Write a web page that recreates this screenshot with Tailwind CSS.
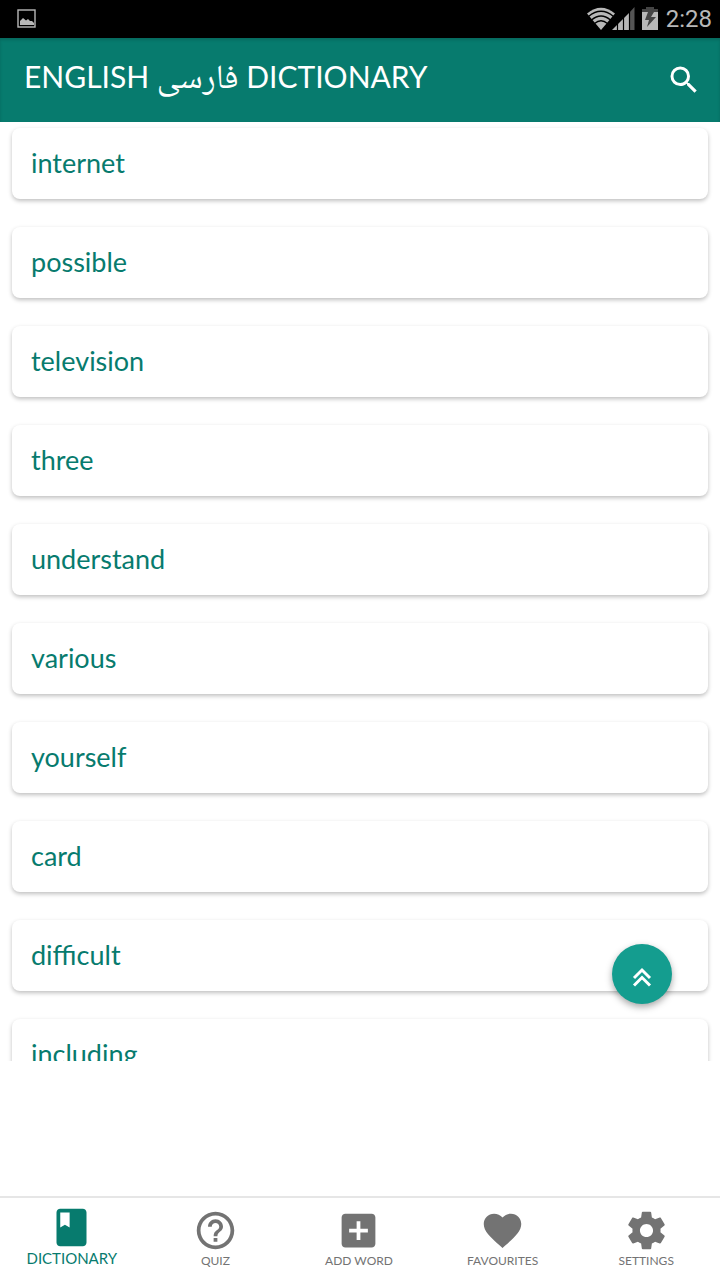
<!DOCTYPE html>
<html lang="en">
<head>
  <meta charset="UTF-8">
  <meta name="viewport" content="width=device-width, initial-scale=1.0">
  <title>English فارسی Dictionary</title>
  <script src="https://cdn.jsdelivr.net/npm/@tailwindcss/browser@4"></script>
</head>
<body class="bg-white font-[Lato,'DejaVu_Sans',sans-serif]">
  <div class="h-screen flex flex-col">
    <!-- Status bar -->
    <div class="h-[38px] shrink-0 bg-black flex items-center justify-between pl-4 pr-2 text-[#b8b8b8]">
      <svg class="w-[22px] h-[22px]" viewBox="0 0 22 22" fill="none">
        <rect x="2" y="2" width="17" height="17" stroke="currentColor" stroke-width="1.4"/>
        <path d="M4 17v-4l3-3 3 2.500 2-1.500 2 2 2 0 2 2v2z" fill="currentColor"/>
      </svg>
      <div class="flex items-center">
        <svg class="w-[30px] h-[24px]" viewBox="0 0 30 24">
          <path d="M1 6.500Q15-5 29 6.500L15 23z" fill="currentColor"/>
          <path d="M2.500 9.500Q15-1 27.500 9.500M5.500 13Q15 5 24.500 13M8.500 16.500Q15 11 21.500 16.500" fill="none" stroke="#000" stroke-width="1.300"/>
        </svg>
        <svg class="w-[24px] h-[24px] -ml-1" viewBox="0 0 24 24">
          <path d="M0 23 17 6v17z" fill="currentColor"/>
          <path d="M17 6 22.500 0v23H17z" fill="#555"/>
          <path d="M5.500 10v14M11.500 6v18M17.500 3v20" stroke="#000" stroke-width="1.200"/>
        </svg>
        <svg class="w-[16px] h-[24px] ml-1.5" viewBox="0 0 16 24">
          <path d="M0 5h16v18H0z" fill="currentColor"/>
          <path d="M4 0h8v2h4v3H0V2h4zM6 5h6L9 10h5L5 20l2-7H3z" fill="#444"/>
        </svg>
        <span class="ml-2 text-2xl font-[Roboto,sans-serif]">2:28</span>
      </div>
    </div>

    <!-- Header -->
    <header class="h-[84px] shrink-0 bg-[#077b6e] flex items-center justify-between pl-6 pr-[18px] pb-1 shadow-[inset_0_2px_3px_rgb(0_0_0/0.15)]">
      <h1 class="text-[30px] leading-9 text-white">ENGLISH <span lang="fa" class="text-[34px] font-[Noto_Naskh_Arabic,DejaVu_Sans,sans-serif]">فارسی</span> DICTIONARY</h1>
      <button type="button" aria-label="Search" class="w-9 h-9 mt-1 text-white">
        <svg class="w-9 h-9" viewBox="0 0 24 24" fill="currentColor">
          <path d="M15.5 14h-.79l-.28-.27A6.471 6.471 0 0 0 16 9.500 6.500 6.500 0 1 0 9.500 16c1.610 0 3.090-.59 4.230-1.570l.27.28v.79l5 4.990L20.490 19l-4.990-5zm-6 0C7.010 14 5 11.990 5 9.500S7.010 5 9.500 5 14 7.010 14 9.500 11.990 14 9.500 14z"/>
        </svg>
      </button>
    </header>

    <!-- Word list -->
    <main class="relative flex-1 min-h-0 overflow-hidden">
      <ul class="flex flex-col gap-7 px-3 pt-1.5 text-[27px] leading-9 text-[#077b6e]">
        <li><a href="#" class="flex items-center h-[71px] px-[19px] pb-0.5 rounded-lg shadow-[0_2px_4px_rgb(0_0_0/0.25)]">internet</a></li>
        <li><a href="#" class="flex items-center h-[71px] px-[19px] pb-0.5 rounded-lg shadow-[0_2px_4px_rgb(0_0_0/0.25)]">possible</a></li>
        <li><a href="#" class="flex items-center h-[71px] px-[19px] pb-0.5 rounded-lg shadow-[0_2px_4px_rgb(0_0_0/0.25)]">television</a></li>
        <li><a href="#" class="flex items-center h-[71px] px-[19px] pb-0.5 rounded-lg shadow-[0_2px_4px_rgb(0_0_0/0.25)]">three</a></li>
        <li><a href="#" class="flex items-center h-[71px] px-[19px] pb-0.5 rounded-lg shadow-[0_2px_4px_rgb(0_0_0/0.25)]">understand</a></li>
        <li><a href="#" class="flex items-center h-[71px] px-[19px] pb-0.5 rounded-lg shadow-[0_2px_4px_rgb(0_0_0/0.25)]">various</a></li>
        <li><a href="#" class="flex items-center h-[71px] px-[19px] pb-0.5 rounded-lg shadow-[0_2px_4px_rgb(0_0_0/0.25)]">yourself</a></li>
        <li><a href="#" class="flex items-center h-[71px] px-[19px] pb-0.5 rounded-lg shadow-[0_2px_4px_rgb(0_0_0/0.25)]">card</a></li>
        <li><a href="#" class="flex items-center h-[71px] px-[19px] pb-0.5 rounded-lg shadow-[0_2px_4px_rgb(0_0_0/0.25)]">difficult</a></li>
        <li><a href="#" class="flex items-center h-[71px] px-[19px] pb-0.5 rounded-lg shadow-[0_2px_4px_rgb(0_0_0/0.25)]">including</a></li>
      </ul>

      <!-- Back to top -->
      <button type="button" aria-label="Back to top" class="absolute right-12 bottom-[57px] w-[60px] h-[60px] pt-1.5 rounded-full bg-[#149d8f] text-white flex items-center justify-center shadow-[0_3px_7px_rgb(0_0_0/0.35)]">
        <svg class="w-5 h-5" viewBox="0 0 20 20" fill="none" stroke="currentColor" stroke-width="3">
          <path d="M2 11l8-8 8 8M2 18.500l8-8 8 8"/>
        </svg>
      </button>
    </main>

    <!-- Banner space -->
    <div class="h-[135px] shrink-0"></div>

    <!-- Bottom navigation -->
    <nav class="h-[84px] shrink-0 border-t-2 border-[#e6e6e6] grid grid-cols-5 pr-0.5 text-[#737373] text-xs leading-4">
      <a href="#" aria-current="page" class="flex flex-col items-center pt-[7px] text-[15px] text-[#077b6e]">
        <svg class="w-[45px] h-[45px]" viewBox="0 0 24 24" fill="currentColor">
          <path d="M18 2H6c-1.100 0-2 .9-2 2v16c0 1.100.9 2 2 2h12c1.100 0 2-.9 2-2V4c0-1.100-.9-2-2-2zM6 4h5v8l-2.500-1.500L6 12V4z"/>
        </svg>
        DICTIONARY
      </a>
      <a href="#" class="flex flex-col items-center pt-2.5">
        <svg class="w-[45px] h-[45px]" viewBox="0 0 24 24" fill="currentColor">
          <path d="M11 18h2v-2h-2v2zm1-16C6.480 2 2 6.480 2 12s4.480 10 10 10 10-4.480 10-10S17.520 2 12 2zm0 18c-4.410 0-8-3.590-8-8s3.590-8 8-8 8 3.590 8 8-3.590 8-8 8zm0-14c-2.210 0-4 1.790-4 4h2c0-1.100.9-2 2-2s2 .9 2 2c0 2-3 1.750-3 5h2c0-2.250 3-2.500 3-5 0-2.210-1.790-4-4-4z"/>
        </svg>
        QUIZ
      </a>
      <a href="#" class="flex flex-col items-center pt-2.5">
        <svg class="w-[45px] h-[45px]" viewBox="0 0 24 24" fill="currentColor">
          <path d="M19 3H5c-1.110 0-2 .9-2 2v14c0 1.100.89 2 2 2h14c1.100 0 2-.9 2-2V5c0-1.100-.9-2-2-2zm-2 10h-4v4h-2v-4H7v-2h4V7h2v4h4v2z"/>
        </svg>
        ADD WORD
      </a>
      <a href="#" class="flex flex-col items-center pt-2.5">
        <svg class="w-[45px] h-[45px]" viewBox="0 0 24 24" fill="currentColor">
          <path d="M12 21.350l-1.450-1.320C5.400 15.360 2 12.280 2 8.500 2 5.420 4.420 3 7.500 3c1.740 0 3.410.81 4.500 2.090C13.090 3.810 14.760 3 16.500 3 19.580 3 22 5.420 22 8.500c0 3.780-3.400 6.860-8.550 11.540L12 21.350z"/>
        </svg>
        FAVOURITES
      </a>
      <a href="#" class="flex flex-col items-center pt-2.5">
        <svg class="w-[45px] h-[45px]" viewBox="0 0 24 24" fill="currentColor">
          <path d="M19.430 12.980c.04-.32.07-.64.07-.98s-.03-.66-.07-.98l2.110-1.650c.19-.15.24-.42.12-.64l-2-3.460c-.12-.22-.39-.3-.61-.22l-2.490 1c-.52-.4-1.080-.73-1.690-.98l-.38-2.650C14.460 2.180 14.250 2 14 2h-4c-.25 0-.46.18-.49.42l-.38 2.650c-.61.25-1.170.59-1.690.98l-2.490-1c-.23-.09-.49 0-.61.22l-2 3.460c-.13.22-.07.49.12.64l2.110 1.650c-.04.32-.07.65-.07.98s.03.66.07.98l-2.110 1.650c-.19.15-.24.42-.12.64l2 3.460c.12.22.39.3.61.22l2.490-1c.52.4 1.080.73 1.690.98l.38 2.650c.03.24.24.42.49.42h4c.25 0 .46-.18.49-.42l.38-2.650c.61-.25 1.170-.59 1.690-.98l2.490 1c.23.09.49 0 .61-.22l2-3.460c.12-.22.07-.49-.12-.64l-2.110-1.650zM12 15.500c-1.930 0-3.500-1.570-3.500-3.500s1.570-3.500 3.500-3.500 3.500 1.570 3.500 3.500-1.570 3.500-3.500 3.500z"/>
        </svg>
        SETTINGS
      </a>
    </nav>
  </div>
</body>
</html>
